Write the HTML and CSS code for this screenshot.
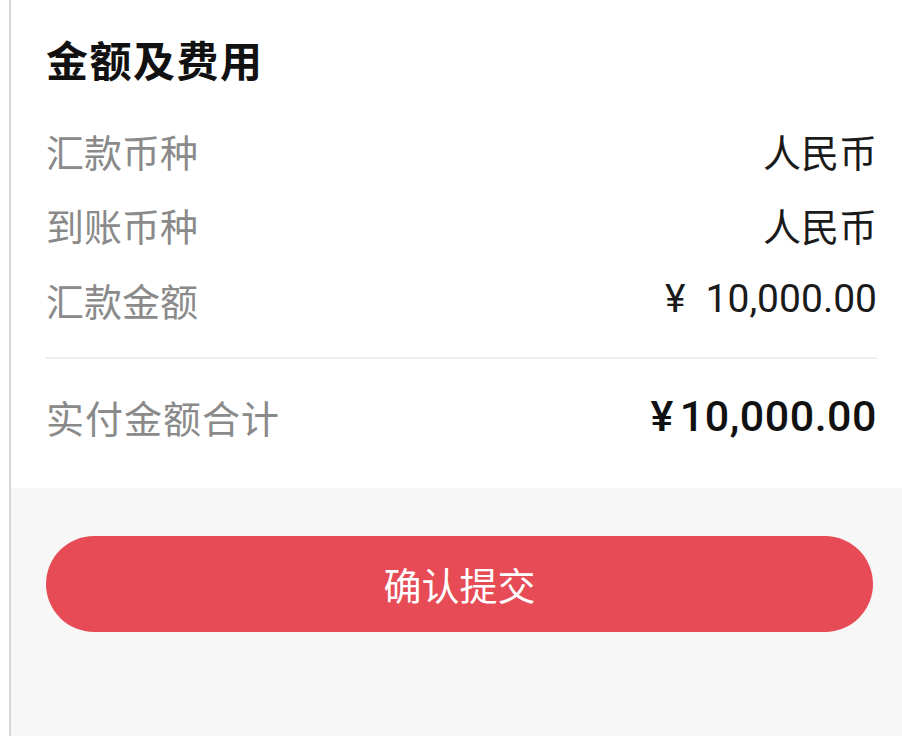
FILE: index.html
```html
<!DOCTYPE html>
<html lang="zh-CN">
<head>
<meta charset="utf-8">
<title>金额及费用</title>
<link rel="stylesheet" href="styles.css">
</head>
<body>
<div class="page">
  <section class="card">
    <h2 class="title">金额及费用</h2>
    <div class="rows">
      <div class="row"><span class="label">汇款币种</span><span class="value">人民币</span></div>
      <div class="row"><span class="label">到账币种</span><span class="value">人民币</span></div>
      <div class="row"><span class="label">汇款金额</span><span class="value num"><span class="yen">¥</span>10,000.00</span></div>
    </div>
    <div class="divider"></div>
    <div class="row total"><span class="label">实付金额合计</span><span class="value total-num"><span class="yen-b">¥</span>10,000.00</span></div>
  </section>
  <div class="actions">
    <button class="submit" type="button">确认提交</button>
  </div>
</div>
</body>
</html>
```
FILE: styles.css
```css
html, body {
  margin: 0;
  padding: 0;
  background: #ffffff;
}
body {
  font-family: "Noto Sans CJK SC", "Noto Sans", sans-serif;
  color: #111;
}
.page {
  margin-left: 9px;
  border-left: 2px solid #d6d6d6;
  background: #f7f7f7;
  min-height: 736px;
  box-sizing: border-box;
}
.card {
  background: #fff;
  padding: 29px 25px 0 35px;
}
.title {
  margin: 0;
  font-size: 42px;
  letter-spacing: 1.5px;
  line-height: 60px;
  font-weight: 700;
  color: #111;
}
.rows {
  margin-top: 24px;
}
.row {
  display: flex;
  justify-content: space-between;
  align-items: center;
  height: 74.5px;
}
.label {
  font-size: 38px;
  color: #8a8a8a;
}
.total .label {
  letter-spacing: 1px;
}
.value {
  font-size: 38px;
  color: #1a1a1a;
}
.num {
  font-family: Roboto, "Noto Sans CJK SC", sans-serif;
  font-size: 39px;
}
.yen {
  margin-right: 20px;
}
.divider {
  margin-top: 20px;
  height: 2px;
  background: #eeeeee;
}
.row.total {
  height: 129px;
  box-sizing: border-box;
  padding-bottom: 14px;
}
.total-num {
  font-family: Roboto, "Noto Sans CJK SC", sans-serif;
  font-size: 43px;
  font-weight: 500;
  letter-spacing: 0.5px;
  color: #111;
}
.yen-b {
  margin-right: 6px;
}
.actions {
  padding: 48px 29px 0 35px;
}
.submit {
  display: block;
  width: 100%;
  height: 96px;
  border: none;
  border-radius: 48px;
  background: #e64b56;
  color: #fff;
  font-family: "Noto Sans CJK SC", "Noto Sans", sans-serif;
  font-size: 38px;
  padding: 0;
}
```
